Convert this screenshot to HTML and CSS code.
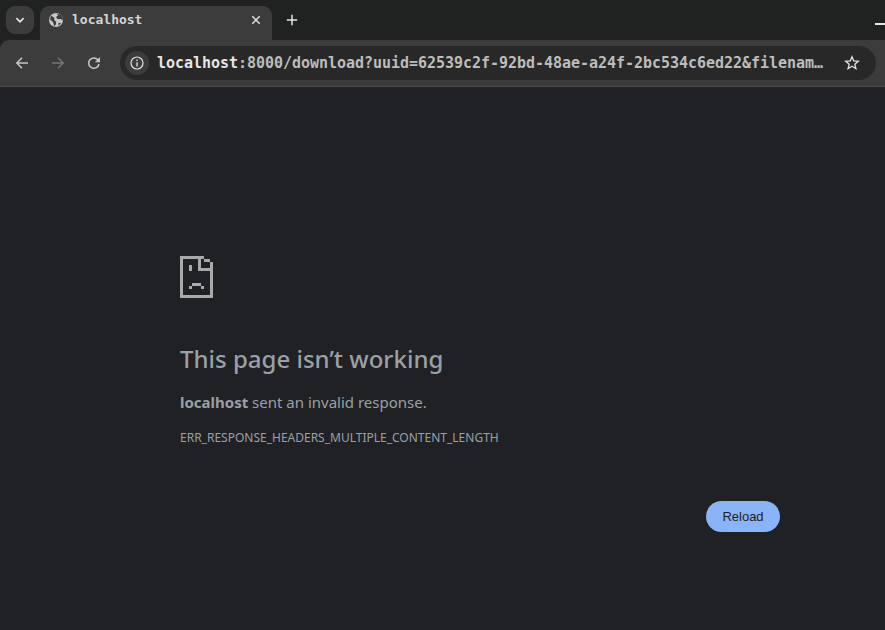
FILE: index.html
```html
<!DOCTYPE html>
<html lang="en">
<head>
<meta charset="utf-8">
<title>localhost</title>
<link rel="stylesheet" href="styles.css">
</head>
<body>
<div class="browser">
  <header class="tabstrip">
    <button class="tabsearch" aria-label="Search tabs">
      <svg width="12" height="12" viewBox="0 0 12 12"><path d="M2.4 4.2 6 7.8l3.6-3.6" fill="none" stroke="#e3e3e3" stroke-width="1.7"/></svg>
    </button>
    <div class="tab">
      <svg class="globe" width="16" height="16" viewBox="0 0 16 16"><circle cx="8" cy="8" r="7" fill="#c4c7c5"/><path d="M3 3.500 6.500 6 6 8l2 1.500V12l-1.500 2.500L5 10 2 7.500ZM9 1.500l1 2-2 1.500 1.500 2H13l1.500 1.500.3-2-1.800-3.500ZM10.500 11H13l-2.500 3Z" fill="#3c3c3c"/></svg>
      <span class="tabtitle">localhost</span>
      <svg class="close" width="10" height="10" viewBox="0 0 10 10"><path d="M1.300 1.300l7.400 7.400M8.700 1.300 1.300 8.700" stroke="#e3e3e3" stroke-width="1.500"/></svg>
    </div>
    <svg class="newtab" width="12" height="12" viewBox="0 0 12 12"><path d="M6 .8v10.400M.8 6h10.400" stroke="#e3e3e3" stroke-width="1.500"/></svg>
    <span class="minimize"></span>
  </header>
  <nav class="toolbar">
    <svg class="navicon" width="16" height="16" viewBox="0 0 16 16"><path d="M14 8H3M8 2.800 2.800 8 8 13.200" fill="none" stroke="#c7c7c7" stroke-width="1.500"/></svg>
    <svg class="navicon" width="16" height="16" viewBox="0 0 16 16"><path d="M2 8h11M8 2.800 13.200 8 8 13.200" fill="none" stroke="#757575" stroke-width="1.500"/></svg>
    <svg class="navicon" width="16" height="16" viewBox="0 0 16 16"><path d="M13 9a5.200 5.200 0 1 1-1.200-4.300L13.400 6.300" fill="none" stroke="#c7c7c7" stroke-width="1.500"/><path d="M14 2v5.200H8.800Z" fill="#c7c7c7"/></svg>
    <div class="omnibox">
      <span class="infochip">
        <svg width="14" height="14" viewBox="0 0 14 14"><circle cx="7" cy="7" r="6" fill="none" stroke="#e3e3e3" stroke-width="1.200"/><path d="M7 6.200v4.200M7 3.400v1.600" stroke="#e3e3e3" stroke-width="1.300"/></svg>
      </span>
      <span class="url"><span class="host">localhost</span>:8000/download?uuid=62539c2f-92bd-48ae-a24f-2bc534c6ed22&amp;filenam…</span>
      <svg class="star" width="16" height="16" viewBox="0 0 16 16"><path d="M8 1.800 9.700 6l4.600.3-3.500 2.900 1.100 4.500L8 11.300 4.100 13.700l1.100-4.500L1.700 6.300 6.300 6Z" fill="none" stroke="#e3e3e3" stroke-width="1.300"/></svg>
    </div>
  </nav>
  <main class="page">
    <div class="content">
      <svg class="sadfile" width="33" height="42" viewBox="0 0 11 14" shape-rendering="crispEdges" fill="#a8a9ab"><path d="M0 0h7v1H0ZM0 0h1v14H0ZM0 13h11v1H0ZM10 2h1v12h-1ZM6 0h1v5H6ZM6 4h5v1H6ZM7 0h1v1H7ZM8 1h1v1H8ZM9 1h1v1H9ZM3 3h1v2H3ZM4 9h3v1H4ZM3 10h1v1H3ZM7 10h1v1H7Z"/></svg>
      <h1 class="title">This page isn’t working</h1>
      <p class="summary"><strong>localhost</strong> sent an invalid response.</p>
      <p class="code">ERR_RESPONSE_HEADERS_MULTIPLE_CONTENT_LENGTH</p>
      <div class="actions"><button class="reload">Reload</button></div>
    </div>
  </main>
</div>
</body>
</html>
```
FILE: styles.css
```css
* { box-sizing: border-box; }
html, body { margin: 0; height: 100%; overflow: hidden; background: #202124; }
.browser { display: flex; flex-direction: column; height: 630px; }
.tabstrip {
  display: flex; align-items: flex-start; height: 40px; padding: 6px 0 0 6px;
  background: #202222; position: relative; flex: none;
}
.tabsearch {
  width: 28px; height: 28px; border: 0; border-radius: 9px; background: #3c3c3c;
  display: flex; align-items: center; justify-content: center; padding: 0; margin-right: 6px;
}
.tab {
  width: 232px; height: 34px; background: #3c3c3c; border-radius: 9px 9px 0 0;
  display: flex; align-items: center; padding: 0 11px 6px 8px;
}
.globe { flex: none; }
.tabtitle {
  flex: 1; margin: 0 0 2px 8px; font: bold 13px "DejaVu Sans Mono", monospace; color: #d4d4d4;
}
.close { flex: none; }
.newtab { margin: 8px 0 0 14px; }
.minimize { position: absolute; right: 0; top: 23px; width: 10px; height: 1.500px; background: #e3e3e3; }
.toolbar {
  height: 47px; background: #3c3c3c; border-radius: 9px 0 0 0; border-bottom: 1px solid #4a4a4a;
  display: flex; align-items: center; padding: 0 9px 1px 14px; gap: 20px; flex: none;
}
.navicon { flex: none; }
.omnibox {
  flex: 1; min-width: 0; height: 34px; border-radius: 17px; background: #282828;
  display: flex; align-items: center; padding: 0 16px 0 5px; margin-left: -2px;
}
.infochip {
  width: 24px; height: 24px; border-radius: 50%; background: #3c3c3c; flex: none;
  display: flex; align-items: center; justify-content: center;
}
.url {
  flex: 1; min-width: 0; margin: 0 10px 0 8px; white-space: nowrap; letter-spacing: -0.03px;
  font: bold 15px "DejaVu Sans Mono", monospace; color: #bdbdbd;
}
.host { color: #e6e6e6; }
.star { flex: none; }
.page { flex: 1; background: #202124; padding: 169px 105px 0 180px; }
.content { display: flex; flex-direction: column; align-items: flex-start; }
.sadfile { display: block; }
.title {
  margin: 46px 0 0; font: 500 24px/30px "Noto Sans", sans-serif; color: #9aa0a6; height: 30px;
}
.summary { margin: 18px 0 0; font: 15px/20px "Noto Sans", sans-serif; color: #9aa0a6; }
.summary strong { font-weight: 700; }
.code { margin: 18px 0 0; font: 12px/16px "Noto Sans", sans-serif; color: #9aa0a6; }
.actions { align-self: stretch; display: flex; justify-content: flex-end; margin-top: 55px; }
.reload {
  width: 74px; height: 31px; border: 0; border-radius: 16px; background: #8ab4f8; color: #202124;
  font: 13px "Liberation Sans", sans-serif; padding: 0;
}
```
